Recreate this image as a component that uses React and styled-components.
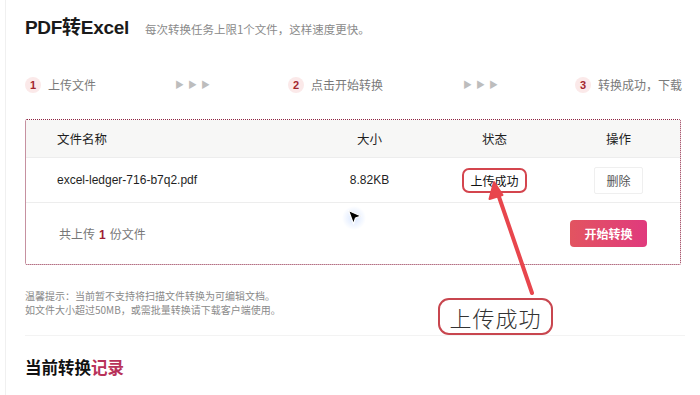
import React from 'react';
import styled, { createGlobalStyle } from 'styled-components';

const GlobalStyle = createGlobalStyle`
  html, body {
    margin: 0;
    padding: 0;
    background: #ffffff;
  }
  body {
    font-family: 'Noto Sans CJK SC', 'Liberation Sans', sans-serif;
    color: #222;
  }
`;

const Page = styled.div`
  position: relative;
  margin-left: 5px;
  width: 683px;
  height: 395px;
  border-left: 1px solid #f0f0f0;
  padding-left: 19px;
  box-sizing: border-box;
  overflow: hidden;
`;

const Header = styled.div`
  display: flex;
  align-items: baseline;
  padding-top: 17px;
  height: 22px;
`;

const Title = styled.h1`
  margin: 0;
  font-family: 'Liberation Sans', 'Noto Sans CJK SC', sans-serif;
  font-size: 19px;
  line-height: 22px;
  font-weight: 700;
  color: #1a1a1a;
  letter-spacing: -0.3px;
`;

const Subtitle = styled.span`
  margin-left: 16px;
  font-size: 11.5px;
  color: #8a8a8a;
`;

const Steps = styled.div`
  display: grid;
  grid-template-columns: 150px 113px 175px 112px 110px;
  align-items: center;
  margin-top: 37px;
  height: 16px;
  white-space: nowrap;
`;

const Step = styled.div`
  display: flex;
  align-items: center;
  gap: 7px;
  font-size: 12px;
  color: #7a7a7a;
`;

const StepNum = styled.span`
  width: 16px;
  height: 16px;
  border-radius: 50%;
  background: #fbe9e9;
  color: #a3262e;
  font-family: 'Liberation Sans', sans-serif;
  font-weight: 700;
  font-size: 11px;
  display: flex;
  align-items: center;
  justify-content: center;
`;

const Arrows = styled.div`
  display: flex;
  gap: 4px;
  color: #bdbdbd;
  font-size: 9px;
  line-height: 1;
`;

const FileBox = styled.div`
  margin-top: 27px;
  width: 656px;
  border: 1px dotted #8e2543;
  border-radius: 2px;
  box-sizing: border-box;
`;

const Row = styled.div`
  display: grid;
  grid-template-columns: 281px 125px 125px 123px;
  align-items: center;
  height: ${p => p.h}px;
  background: ${p => p.bg || '#fff'};
  border-bottom: ${p => (p.line ? '1px solid #ededed' : 'none')};
  font-size: ${p => p.fs || 12}px;
  color: #1f1f1f;
`;

const Cell = styled.div`
  padding-left: ${p => (p.left ? '31px' : '0')};
  display: flex;
  justify-content: ${p => (p.left ? 'flex-start' : 'center')};
  font-family: ${p => (p.latin ? "'Liberation Sans', sans-serif" : 'inherit')};
`;

const StatusTag = styled.span`
  display: inline-flex;
  align-items: center;
  justify-content: center;
  width: 65px;
  height: 25px;
  box-sizing: border-box;
  border: 2px solid #d4454e;
  border-radius: 7px;
  font-size: 12px;
  color: #111;
`;

const DeleteButton = styled.button`
  width: 49px;
  height: 27px;
  border: 1px solid #efefef;
  border-radius: 2px;
  background: #fff;
  font-family: inherit;
  font-size: 12px;
  color: #555;
  padding: 0;
`;

const Footer = styled.div`
  display: flex;
  align-items: center;
  justify-content: space-between;
  height: 61px;
  padding: 0 33px;
  font-size: 12px;
  color: #777;
`;

const Count = styled.b`
  color: #9d2035;
  font-family: 'Liberation Sans', sans-serif;
  margin: 0 4px;
`;

const ConvertButton = styled.button`
  width: 77px;
  height: 27px;
  border: none;
  border-radius: 4px;
  background: linear-gradient(90deg, #e25460 0%, #e03a7d 100%);
  color: #fff;
  font-family: inherit;
  font-weight: 700;
  font-size: 12px;
  padding: 0;
`;

const Tips = styled.div`
  margin-top: 24px;
  font-size: 10px;
  line-height: 14px;
  color: #8a8a8a;
`;

const Divider = styled.div`
  margin-top: 18px;
  width: 660px;
  height: 1px;
  background: #f3f3f3;
`;

const RecordTitle = styled.h2`
  margin: 21px 0 0;
  font-size: 16.5px;
  font-weight: 700;
  color: #111;
  line-height: 20px;
`;

const Accent = styled.span`
  color: #b8325a;
`;

const Callout = styled.div`
  position: absolute;
  left: 438px;
  top: 298px;
  width: 115px;
  height: 37px;
  box-sizing: border-box;
  border: 2px solid #c8464f;
  border-radius: 11px;
  background: #fff;
  display: flex;
  align-items: center;
  justify-content: center;
  font-size: 22px;
  font-weight: 300;
  color: #333;
  letter-spacing: 1px;
`;

const Overlay = styled.svg`
  position: absolute;
  left: 0;
  top: 0;
  pointer-events: none;
`;

export default function App() {
  return (
    <>
      <GlobalStyle />
      <Page>
        <Header>
          <Title>PDF转Excel</Title>
          <Subtitle>每次转换任务上限1个文件，这样速度更快。</Subtitle>
        </Header>

        <Steps>
          <Step><StepNum>1</StepNum>上传文件</Step>
          <Arrows><span>▶</span><span>▶</span><span>▶</span></Arrows>
          <Step><StepNum>2</StepNum>点击开始转换</Step>
          <Arrows><span>▶</span><span>▶</span><span>▶</span></Arrows>
          <Step><StepNum>3</StepNum>转换成功，下载</Step>
        </Steps>

        <FileBox>
          <Row h={37} bg="#f7f7f6" fs={12.5} line>
            <Cell left>文件名称</Cell>
            <Cell>大小</Cell>
            <Cell>状态</Cell>
            <Cell>操作</Cell>
          </Row>
          <Row h={44} line>
            <Cell left latin>excel-ledger-716-b7q2.pdf</Cell>
            <Cell latin>8.82KB</Cell>
            <Cell><StatusTag>上传成功</StatusTag></Cell>
            <Cell><DeleteButton>删除</DeleteButton></Cell>
          </Row>
          <Footer>
            <span>共上传<Count>1</Count>份文件</span>
            <ConvertButton>开始转换</ConvertButton>
          </Footer>
        </FileBox>

        <Tips>
          温馨提示：当前暂不支持将扫描文件转换为可编辑文档。<br />
          如文件大小超过50MB，或需批量转换请下载客户端使用。
        </Tips>

        <Divider />

        <RecordTitle>当前转换<Accent>记录</Accent></RecordTitle>
      </Page>

      <Overlay width="700" height="395" viewBox="0 0 700 395">
        <defs>
          <radialGradient id="glow" cx="0.5" cy="0.5" r="0.5">
            <stop offset="0%" stopColor="#cfe0ff" stopOpacity="0.8" />
            <stop offset="100%" stopColor="#cfe0ff" stopOpacity="0" />
          </radialGradient>
        </defs>
        <circle cx="354" cy="218" r="12" fill="url(#glow)" />
        <path
          d="M348.5 210.5 L361 216 L355.5 218 L353.5 224 Z"
          fill="#000"
          stroke="#fff"
          strokeWidth="1.2"
          strokeLinejoin="round"
        />
        <line x1="532" y1="293" x2="498" y2="194" stroke="#e8464d" strokeWidth="4" strokeLinecap="round" />
        <path d="M494 182 L489.5 199 L502.5 195 Z" fill="#e8464d" stroke="#e8464d" strokeWidth="2" strokeLinejoin="round" />
      </Overlay>
      <Callout>上传成功</Callout>
    </>
  );
}
